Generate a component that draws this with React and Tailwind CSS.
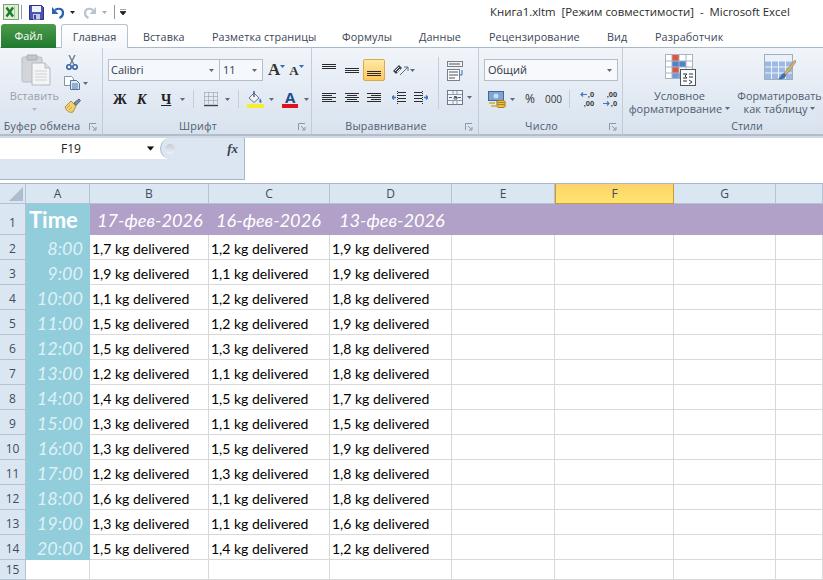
const ui = { fontFamily: '"Open Sans", "Noto Sans", sans-serif' }

const times = ['8:00','9:00','10:00','11:00','12:00','13:00','14:00','15:00','16:00','17:00','18:00','19:00','20:00']
const rows = [
  ['1,7','1,2','1,9'],['1,9','1,1','1,9'],['1,1','1,2','1,8'],['1,5','1,2','1,9'],['1,5','1,3','1,8'],
  ['1,2','1,1','1,8'],['1,4','1,5','1,7'],['1,3','1,1','1,5'],['1,3','1,5','1,9'],['1,2','1,3','1,8'],
  ['1,6','1,1','1,8'],['1,3','1,1','1,6'],['1,5','1,4','1,2'],
]

function Caret({ className = '', color = '#5f6b7a' }) {
  return <svg width="5" height="3" viewBox="0 0 5 3" className={`shrink-0 ${className}`}><path d="M0 0h5L2.5 3z" fill={color} /></svg>
}

function Launcher() {
  return (
    <svg width="8" height="8" viewBox="0 0 8 8" className="shrink-0">
      <path d="M.5 7V.5H7" fill="none" stroke="#8b97a6" />
      <path d="M3 3l3.5 3.5M7 4v3H4" fill="none" stroke="#8b97a6" />
    </svg>
  )
}

function Group({ label, width, children }) {
  return (
    <div className="flex flex-col h-full border-r border-[#c3ccd8] shrink-0" style={{ width }}>
      <div className="flex-1 min-h-0">{children}</div>
      <div className="h-[15px] flex items-center justify-center relative pr-[18px] text-[10.7px] text-[#4f5d70] tracking-[0.2px] whitespace-nowrap">
        {label}
        <span className="absolute right-[5px] top-[4px] flex"><Launcher /></span>
      </div>
    </div>
  )
}

function Lines({ rows: r, w = 14, align = 'left' }) {
  return (
    <svg width={w} height={r.length * 2} viewBox={`0 0 ${w} ${r.length * 2}`} className="shrink-0">
      {r.map((l, i) => {
        const x = align === 'left' ? 0 : align === 'right' ? w - l : (w - l) / 2
        return <rect key={i} x={x} y={i * 2} width={l} height="1" fill="#2b2b2b" />
      })}
    </svg>
  )
}

function PasteIcon() {
  return (
    <svg width="30" height="32" viewBox="0 0 30 32">
      <rect x="1" y="3" width="20" height="25" rx="1.5" fill="#d3d5d8" stroke="#b9bcc1" />
      <rect x="6" y="1" width="10" height="5" rx="1" fill="#c3c6ca" stroke="#a9adb3" />
      <path d="M11 9h13l5 5v17H11z" fill="#f4f5f6" stroke="#b6b9be" />
      <path d="M24 9v5h5" fill="#e0e2e5" stroke="#b6b9be" />
      <path d="M14 17h12M14 20h12M14 23h12M14 26h12" stroke="#cfd2d6" />
    </svg>
  )
}

function Scissors() {
  return (
    <svg width="12" height="15" viewBox="0 0 12 15">
      <path d="M3 0l4.6 9M9 0L4.4 9" stroke="#6f7a88" strokeWidth="1.4" fill="none" />
      <circle cx="3" cy="12" r="2.2" fill="none" stroke="#2f5f9e" strokeWidth="1.5" />
      <circle cx="9" cy="12" r="2.2" fill="none" stroke="#2f5f9e" strokeWidth="1.5" />
    </svg>
  )
}

function CopyIcon() {
  return (
    <svg width="16" height="14" viewBox="0 0 16 14">
      <path d="M.5.5h7l2 2v7h-9z" fill="#fff" stroke="#7f93ad" />
      <path d="M6.5 4.5h6l3 3v6h-9z" fill="#dfe9f5" stroke="#52739f" />
      <path d="M8 8h6M8 10h6M8 12h6" stroke="#52739f" />
    </svg>
  )
}

function Brush() {
  return (
    <svg width="17" height="15" viewBox="0 0 17 15">
      <path d="M1 9l6-6 5 5-3 6c-3 1-6 0-8-5z" fill="#f0d175" stroke="#b58f36" />
      <path d="M10 5l5-4 1.5 1.5-4.5 5z" fill="#7d8fa8" stroke="#56657a" />
      <path d="M3 10l3-3M5 12l3-3" stroke="#c9a244" />
    </svg>
  )
}

function FillIcon() {
  return (
    <svg width="17" height="17" viewBox="0 0 17 17">
      <path d="M2 7l5-5 5 5-5 4.5z" fill="#f2f4f7" stroke="#6a7787" />
      <path d="M7 0v6" stroke="#3f5f8a" strokeWidth="1.4" />
      <path d="M13 7c1 2 2 3 1.5 4.3-.6 1-2.2.6-2.2-.7 0-1 .4-2 .7-3.6z" fill="#4a79b5" />
      <rect x="0" y="13" width="17" height="4" fill="#f6ee2b" />
    </svg>
  )
}

function BorderIcon() {
  return (
    <svg width="14" height="15" viewBox="0 0 14 15">
      <path d="M.5.5h13M.5 4.5h13M.5 8.5h13M.5.5v12M4.5.5v12M9.5.5v12M13.5.5v12" stroke="#8a929c" strokeDasharray="1 1" fill="none" />
      <path d="M0 13.5h14" stroke="#3a3f46" strokeWidth="1.4" />
    </svg>
  )
}

function OrientIcon() {
  return (
    <svg width="17" height="15" viewBox="0 0 17 15">
      <path d="M1 8l6-6 3 3-6 6z" fill="#3f444b" />
      <path d="M3 8l4-4M5 9l3-3" stroke="#e8edf3" />
      <path d="M8 12l8-8" stroke="#5f6b7a" />
      <path d="M12 4h4v4" fill="none" stroke="#5f6b7a" />
    </svg>
  )
}

function WrapIcon() {
  return (
    <svg width="17" height="20" viewBox="0 0 17 20">
      <rect x=".5" y=".5" width="15" height="5" fill="#f3f5f8" stroke="#77808c" />
      <path d="M2 3h11" stroke="#4c5561" />
      <rect x=".5" y="8.5" width="12" height="11" fill="#fdfdfe" stroke="#77808c" />
      <path d="M2 11h9M2 14h9M2 17h6" stroke="#4c5561" />
      <path d="M15 9v5h-3" fill="none" stroke="#3a6ea8" />
    </svg>
  )
}

function MergeIcon() {
  return (
    <svg width="16" height="15" viewBox="0 0 16 15">
      <rect x=".5" y=".5" width="15" height="14" fill="#f2f5f9" stroke="#6f7b8a" />
      <path d="M1 4.5h14M1 10.5h14M6 1v3M10 1v3M6 11v3M10 11v3" stroke="#8f9aa8" />
      <path d="M2 7.5h3M11 7.5h3" stroke="#2c66ad" />
      <path d="M7 6.5h2c.6 0 1 .4 1 1v1.500H7.500c-1 0-1-1.500 0-1.500H10" fill="none" stroke="#333" strokeWidth=".8" />
    </svg>
  )
}

function Indent({ flip }) {
  return (
    <svg width="14" height="14" viewBox="0 0 14 14" className={flip ? '-scale-x-100' : ''}>
      <path d="M6 1.500h8M6 4.500h8M6 7.500h8M6 10.500h8" stroke="#2b2b2b" />
      <path d="M5.500 0v14" stroke="#2b2b2b" strokeDasharray="1 1" />
      <path d="M0 6.500h4M2 4.500L0 6.500l2 2" stroke="#3f78bd" strokeWidth="1.3" fill="none" />
    </svg>
  )
}

function MoneyIcon() {
  return (
    <svg width="19" height="17" viewBox="0 0 19 17">
      <rect x=".5" y=".5" width="15" height="9" fill="#7fa3d3" stroke="#41679b" />
      <circle cx="8" cy="5" r="2.5" fill="#c8dbf1" />
      <ellipse cx="13" cy="11" rx="4.5" ry="1.6" fill="#efc44d" stroke="#a67e1d" />
      <ellipse cx="13" cy="13" rx="4.5" ry="1.6" fill="#efc44d" stroke="#a67e1d" />
      <ellipse cx="13" cy="15" rx="4.5" ry="1.6" fill="#efc44d" stroke="#a67e1d" />
      <path d="M1 12h6M3 15h5" stroke="#d4a933" strokeWidth="1.5" />
    </svg>
  )
}

function DecimalArrow({ flip }) {
  return (
    <svg width="7" height="5" viewBox="0 0 7 5" className={`shrink-0 ${flip ? '-scale-x-100' : ''}`}>
      <path d="M7 2.500H1M3 .5L1 2.500l2 2" fill="none" stroke="#3f78bd" strokeWidth="1.2" />
    </svg>
  )
}

function CondIcon() {
  return (
    <svg width="31" height="32" viewBox="0 0 31 32">
      <rect x=".5" y=".5" width="27" height="24" fill="#fff" stroke="#a9b4c2" />
      <rect x="7" y="1" width="7" height="6" fill="#e0553f" />
      <rect x="7" y="7" width="14" height="6" fill="#4f83cc" />
      <rect x="7" y="13" width="7" height="6" fill="#e0553f" />
      <rect x="7" y="19" width="10" height="5" fill="#6e9adb" />
      <path d="M7 1v24M14 1v24M21 1v24M1 7h26M1 13h26M1 19h26" stroke="#a9b4c2" />
      <rect x="15.500" y="15.500" width="15" height="16" fill="#fafbfc" stroke="#4b5663" />
      <path d="M18 20h4l-2 2 2 2h-4M24 20h4M24 23h4M18 27h4M24 26l3 2-3 2" fill="none" stroke="#333" />
    </svg>
  )
}

function TableIcon() {
  return (
    <svg width="32" height="32" viewBox="0 0 32 32">
      <rect x=".5" y=".5" width="28" height="25" fill="#eaf0f8" stroke="#a3afbf" />
      <rect x="1" y="7" width="27" height="18" fill="#9db9e3" />
      <path d="M7.500 1v24M14.500 1v24M21.500 1v24M1 7h27M1 13h27M1 19h27" stroke="#eef3fa" />
      <path d="M31 6L20 19l2 2L32 8z" fill="#d9b36a" stroke="#8a6d32" strokeWidth=".5" />
      <path d="M20 19c-3 1-3 4-6 6 4 1 8-1 8-4z" fill="#3f6fb5" />
    </svg>
  )
}

function ExcelLogo() {
  return (
    <svg width="16" height="16" viewBox="0 0 16 16">
      <rect x=".5" y=".5" width="15" height="15" fill="#dcefd3" stroke="#7da078" />
      <path d="M11.500 2v12" stroke="#a9cfa2" />
      <path d="M3.500 3.500l6.500 9M10 3.500l-6.500 9" stroke="#1c7a2e" strokeWidth="2.4" />
    </svg>
  )
}

function SaveIcon() {
  return (
    <svg width="15" height="15" viewBox="0 0 15 15">
      <path d="M.5.5h12l2 2v12H.5z" fill="#4a55b8" stroke="#2a3178" />
      <rect x="3" y="1" width="9" height="6" fill="#eef1f8" />
      <rect x="4" y="9" width="7" height="5.500" fill="#c4cadc" />
      <rect x="5" y="10" width="2" height="4" fill="#3a4392" />
    </svg>
  )
}

function Undo({ color = '#2f62ad', flip }) {
  return (
    <svg width="13" height="13" viewBox="0 0 13 13" className={flip ? '-scale-x-100' : ''}>
      <path d="M3 4c4-2.500 8-1 8 3 0 2-1 4-3.500 5" fill="none" stroke={color} strokeWidth="2.200" />
      <path d="M0 1v7h6.500z" fill={color} />
    </svg>
  )
}

function TitleBar() {
  return (
    <div className="h-[24px] bg-white flex items-center pl-[3px] relative">
      <ExcelLogo />
      <span className="w-px h-[14px] bg-[#8e98a4] ml-[2px]" />
      <span className="flex ml-[7px]"><SaveIcon /></span>
      <span className="flex ml-[8px]"><Undo /></span>
      <Caret className="ml-[5px]" color="#222" />
      <span className="flex ml-[8px]"><Undo color="#b8c5d3" flip /></span>
      <Caret className="ml-[6px]" color="#a6adb6" />
      <span className="w-px h-[14px] bg-[#8e98a4] ml-[7px]" />
      <svg width="6" height="6" viewBox="0 0 6 6" className="ml-[5px]"><path d="M0 0h6M0 2.500h6L3 6z" stroke="#222" strokeWidth=".8" fill="#222" /></svg>
      <span className="absolute left-[490px] top-[4px] text-[11.4px] leading-[16px] text-[#2b2b2b] whitespace-pre">{'Книга1.xltm  [Режим совместимости]  -  Microsoft Excel'}</span>
    </div>
  )
}

function Tabs() {
  const tabs = [['Вставка', 143], ['Разметка страницы', 212], ['Формулы', 342], ['Данные', 419], ['Рецензирование', 489], ['Вид', 607], ['Разработчик', 655]]
  return (
    <div className="h-[24px] bg-white flex items-stretch relative border-b border-[#a9b9cc]">
      <div className="w-[55px] ml-[1px] h-[24px] pt-[1px] rounded-t-[3px] bg-gradient-to-b from-[#4c9a4c] to-[#1d7a2e] text-white text-[11px] flex items-center justify-center">Файл</div>
      <div className="w-[67px] ml-[5px] h-[24px] pt-[1px] rounded-t-[3px] border border-b-0 border-[#b5c2d1] bg-gradient-to-b from-white to-[#f3f6fa] text-[#3b4656] text-[11px] flex items-center justify-center z-10">Главная</div>
      {tabs.map(([t, x]) => (
        <span key={t} className="absolute top-[5px] text-[10.8px] leading-[16px] text-[#3b4656] tracking-[0.1px]" style={{ left: x }}>{t}</span>
      ))}
    </div>
  )
}

function Ribbon() {
  return (
    <div className="h-[88px] flex bg-gradient-to-b from-[#f1f5fa] via-[#e4ebf4] to-[#d8e2ee] border-b-[2px] border-[#b3bdc9]">
      <Group label="Буфер обмена" width={103}>
        <div className="flex h-full pt-[5px]">
          <div className="w-[64px] flex flex-col items-center">
            <div className="ml-[8px] mt-[1px]"><PasteIcon /></div>
            <span className="text-[11px] leading-[14px] text-[#9a9fa6] mt-[3px] ml-[5px] tracking-[0.1px]">Вставить</span>
            <Caret className="mt-[5px] ml-[4px]" color="#b3b8bf" />
          </div>
          <div className="flex flex-col mt-[2px]">
            <div className="ml-[2px]"><Scissors /></div>
            <div className="flex items-center gap-[3px] mt-[6px]"><CopyIcon /><Caret /></div>
            <div className="mt-[8px]"><Brush /></div>
          </div>
        </div>
      </Group>

      <Group label="Шрифт" width={209}>
        <div className="pl-[5px] pt-[11px]">
          <div className="flex items-center">
            <div className="w-[112px] h-[22px] bg-[#f5f8fc] border border-[#b3bdcb] flex items-center justify-between pl-[2px] pr-[5px] text-[11px] text-[#2f3844]">Calibri<Caret /></div>
            <div className="w-[43px] h-[22px] bg-[#f5f8fc] border border-l-0 border-[#b3bdcb] flex items-center justify-between pl-[3px] pr-[5px] text-[11px] text-[#2f3844]">11<Caret /></div>
            <span className="ml-[5px] text-[17px] leading-[20px] font-bold text-[#333]" style={{ fontFamily: '"Liberation Serif", serif' }}>A</span>
            <span className="-mt-[8px]"><Caret color="#2f6fb8" /></span>
            <span className="ml-[4px] text-[13px] leading-[20px] font-bold text-[#333] mt-[2px]" style={{ fontFamily: '"Liberation Serif", serif' }}>A</span>
            <span className="-mt-[8px]"><Caret color="#2f6fb8" /></span>
          </div>
          <div className="flex items-center mt-[7px] h-[22px]">
            <div className="flex items-center text-[14px] font-bold text-[#222]" style={{ fontFamily: '"Liberation Serif", serif' }}>
              <span className="w-[24px] ml-[5px]">Ж</span>
              <span className="w-[24px] italic">К</span>
              <span className="underline">Ч</span>
            </div>
            <Caret className="ml-[9px]" />
            <span className="w-px h-[18px] bg-[#c5cdd8] ml-[8px]" />
            <span className="ml-[10px] flex"><BorderIcon /></span>
            <Caret className="ml-[7px]" />
            <span className="w-px h-[18px] bg-[#c5cdd8] ml-[8px]" />
            <span className="ml-[8px] flex"><FillIcon /></span>
            <Caret className="ml-[5px]" />
            <div className="ml-[8px] flex flex-col items-center w-[16px]">
              <span className="text-[15px] leading-[13px] font-bold text-[#1f4e8c]">A</span>
              <span className="w-[16px] h-[4px] bg-[#e0101c]" />
            </div>
            <Caret className="ml-[6px]" />
          </div>
        </div>
      </Group>

      <Group label="Выравнивание" width={167}>
        <div className="flex pt-[10px] pl-[10px]">
          <div className="w-[116px] shrink-0">
            <div className="flex items-center h-[24px]">
              <div className="w-[14px] -mt-[6px]"><Lines rows={[14, 14, 14]} /></div>
              <div className="w-[14px] ml-[9px] mt-[2px]"><Lines rows={[14, 14, 14]} /></div>
              <div className="w-[22px] h-[22px] ml-[4px] rounded-[2px] border border-[#d8a94e] bg-gradient-to-b from-[#ffe9a3] to-[#fdc95c] flex items-end justify-center pb-[3px]"><Lines rows={[14, 14, 14]} /></div>
              <span className="ml-[7px] flex"><OrientIcon /></span>
              <Caret className="ml-[1px]" />
            </div>
            <div className="flex items-center h-[22px] mt-[5px]">
              <Lines rows={[14, 10, 14, 10, 14]} />
              <div className="ml-[9px]"><Lines rows={[14, 10, 14, 10, 14]} align="center" /></div>
              <div className="ml-[8px]"><Lines rows={[14, 10, 14, 10, 14]} align="right" /></div>
              <span className="ml-[11px] flex"><Indent /></span>
              <span className="ml-[8px] flex"><Indent flip /></span>
            </div>
          </div>
          <span className="w-px h-[52px] bg-[#c5cdd8] mt-[-1px]" />
          <div className="ml-[8px] flex flex-col items-start">
            <span className="flex mt-[3px]"><WrapIcon /></span>
            <span className="flex items-center gap-[4px] mt-[9px]"><MergeIcon /><Caret /></span>
          </div>
        </div>
      </Group>

      <Group label="Число" width={144}>
        <div className="pl-[5px] pt-[11px]">
          <div className="w-[134px] h-[22px] bg-[#f7f9fc] border border-[#b3bdcb] flex items-center justify-between pl-[3px] pr-[5px] text-[11px] text-[#2f3844]">Общий<Caret /></div>
          <div className="flex items-center mt-[7px] h-[22px] ml-[4px]">
            <MoneyIcon />
            <Caret className="ml-[3px]" />
            <span className="ml-[10px] text-[12px] text-[#333]">%</span>
            <span className="ml-[10px] text-[10px] text-[#333]">000</span>
            <span className="w-px h-[18px] bg-[#c5cdd8] ml-[7px]" />
            <div className="ml-[8px] w-[16px] flex flex-col text-[7.5px] leading-[9px] font-bold text-[#333]" style={{ fontFamily: '"Liberation Sans", sans-serif' }}>
              <span className="flex items-center justify-end gap-[1px]"><DecimalArrow />,0</span>
              <span className="text-right">,00</span>
            </div>
            <div className="ml-[7px] w-[16px] flex flex-col text-[7.5px] leading-[9px] font-bold text-[#333]" style={{ fontFamily: '"Liberation Sans", sans-serif' }}>
              <span className="text-right">,00</span>
              <span className="flex items-center justify-end gap-[1px]"><DecimalArrow flip />,0</span>
            </div>
          </div>
        </div>
      </Group>

      <div className="flex-1 flex flex-col min-w-0">
        <div className="flex-1 flex pt-[6px]">
          <div className="w-[113px] shrink-0 flex flex-col items-center">
            <span className="ml-[2px] flex"><CondIcon /></span>
            <span className="text-[11px] leading-[13px] text-[#4f5d70] mt-[3px]">Условное</span>
            <span className="text-[11px] leading-[13px] text-[#4f5d70] flex items-center gap-[3px] whitespace-nowrap">форматирование<Caret /></span>
          </div>
          <div className="flex flex-col items-center w-[87px] shrink-0">
            <span className="flex"><TableIcon /></span>
            <span className="text-[10.8px] leading-[13px] text-[#4f5d70] mt-[3px] whitespace-nowrap">Форматировать</span>
            <span className="text-[11px] leading-[13px] text-[#4f5d70] flex items-center gap-[3px]">как таблицу<Caret /></span>
          </div>
        </div>
        <div className="h-[15px] flex items-center justify-center text-[10.7px] text-[#4f5d70] pl-[48px]">Стили</div>
      </div>
    </div>
  )
}

function FormulaBar() {
  return (
    <div className="h-[45px] bg-white">
      <div className="w-[245px] h-[42px] bg-[#dce6f2] border-b border-r border-[#a9b7c6] flex flex-col">
        <div className="h-[21px] flex items-stretch bg-white">
          <div className="w-[160px] shrink-0 flex items-center text-[12px] text-[#222]">
            <span className="w-[142px] text-center">F19</span>
            <Caret className="ml-[6px] scale-150" color="#111" />
          </div>
          <div className="flex-1 bg-[#dce6f2] rounded-l-[11px] border-l border-[#a9b7c6] flex items-center justify-between pl-[4px] pr-[6px]">
            <span className="w-[10px] h-[10px] rounded-full bg-gradient-to-b from-[#c3ccd6] to-[#eef3f8]" />
            <span className="text-[13px] font-bold italic text-[#3a3f46]" style={{ fontFamily: '"Liberation Serif", serif' }}>fx</span>
          </div>
        </div>
      </div>
    </div>
  )
}

const headCell = 'h-[20px] pt-[1px] flex items-center justify-center bg-[#dbe6f3] border-r border-b border-[#b4c2d2] text-[12px] text-[#3f4c5c]'
const rowHead = 'flex items-center justify-center bg-[#dbe6f3] border-r border-b border-[#b4c2d2] text-[12px] text-[#3f4c5c]'
const cell = 'h-[25px] bg-white border-r border-b border-[#d9d9d9]'
const cellFont = { fontFamily: 'Lato, "Open Sans", sans-serif' }

function Sheet() {
  return (
    <div className="grid grid-cols-[26px_64px_119px_121px_122px_103px_119px_102px_47px] border-t border-[#a9b7c6]">
      <div className={`${headCell} justify-end items-end`}>
        <svg width="14" height="14" viewBox="0 0 14 14" className="mr-[2px] mb-[2px]"><path d="M14 0v14H0z" fill="#aebccb" /></svg>
      </div>
      {['A', 'B', 'C', 'D', 'E'].map((c) => <div key={c} className={headCell}>{c}</div>)}
      <div className="h-[20px] pt-[1px] flex items-center justify-center bg-gradient-to-b from-[#fdd36a] to-[#ffe56f] border border-t-0 border-[#c79a3d] text-[12px] text-[#3f4c5c]">F</div>
      <div className={headCell}>G</div>
      <div className={headCell} />

      <div className={`${rowHead} h-[31px] pt-[7px]`}>1</div>
      <div className="h-[31px] bg-[#92cddc] flex items-center pl-[3px] text-[22px] font-bold text-white" style={cellFont}>Time</div>
      {['17-фев-2026', '16-фев-2026', '13-фев-2026'].map((d, i) => (
        <div key={d} className={`h-[31px] bg-[#b1a0c7] flex items-center pt-[2px] text-[18.2px] italic text-white whitespace-nowrap ${i === 2 ? 'pl-[9px]' : 'pl-[7px]'}`} style={cellFont}>{d}</div>
      ))}
      <div className="h-[31px] bg-[#b1a0c7]" />
      <div className="h-[31px] bg-[#b1a0c7]" />
      <div className="h-[31px] bg-[#b1a0c7]" />
      <div className="h-[31px] bg-[#b1a0c7]" />

      {times.map((t, i) => (
        <Row key={t} n={i + 2} time={t} vals={rows[i]} />
      ))}

      <div className={`${rowHead} h-[20px]`}>15</div>
      {[0, 1, 2, 3, 4, 5, 6, 7].map((k) => <div key={k} className="h-[20px] bg-white border-r border-b border-[#d9d9d9]" />)}
    </div>
  )
}

function Row({ n, time, vals }) {
  return (
    <>
      <div className={`${rowHead} h-[25px] pt-[3px]`}>{n}</div>
      <div className="h-[25px] pt-[2px] bg-[#92cddc] flex items-center justify-end pr-[7px] text-[18px] italic text-[#dff1f5]" style={cellFont}>{time}</div>
      {vals.map((v, i) => (
        <div key={i} className={`${cell} pt-[2px] flex items-center pl-[2px] text-[14px] text-black whitespace-nowrap`} style={cellFont}>{v} kg delivered</div>
      ))}
      <div className={cell} />
      <div className={cell} />
      <div className={cell} />
      <div className={cell} />
    </>
  )
}

export default function App() {
  return (
    <div className="w-[823px] h-[580px] overflow-hidden bg-white" style={ui}>
      <TitleBar />
      <Tabs />
      <Ribbon />
      <div className="h-[2px] bg-[#d0d9e4]" />
      <FormulaBar />
      <Sheet />
    </div>
  )
}
